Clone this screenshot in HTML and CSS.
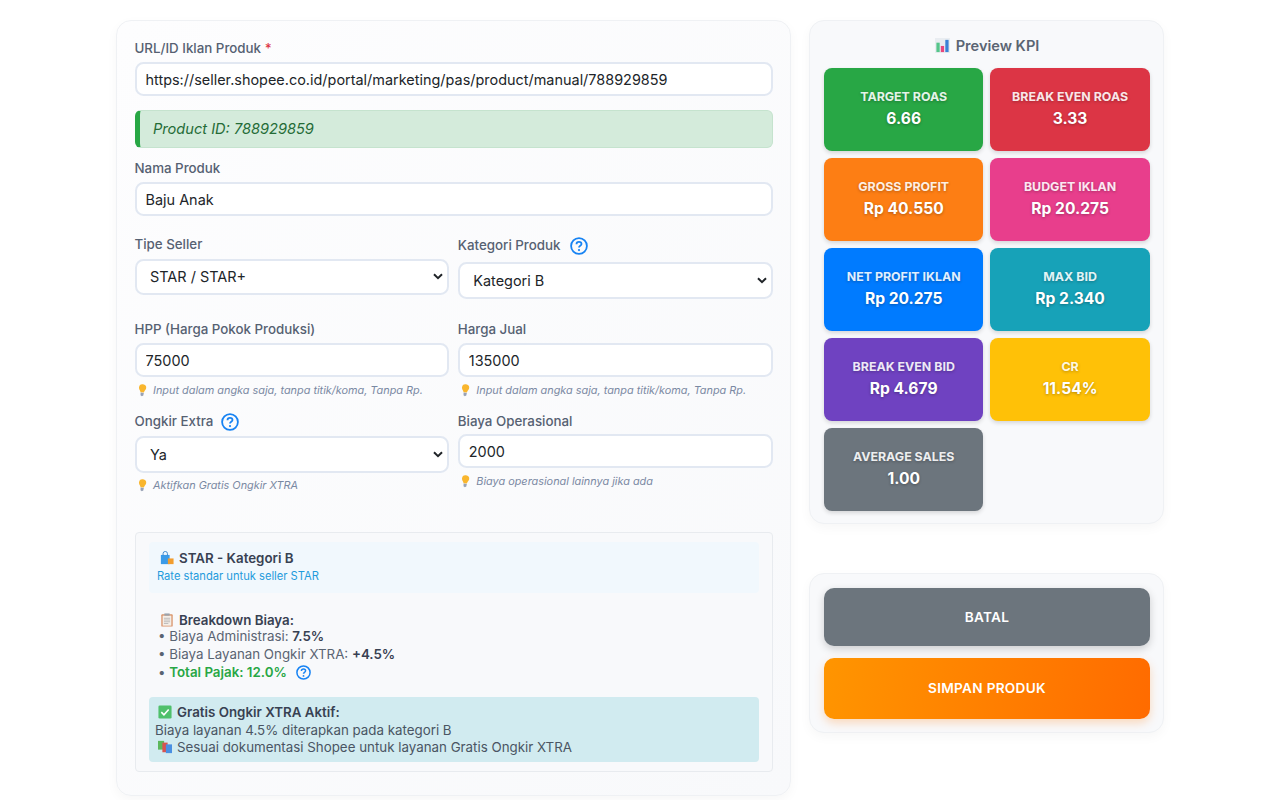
FILE: index.html
```html
<!DOCTYPE html>
<html lang="id">
<head>
<meta charset="utf-8">
<title>Produk</title>
<link rel="stylesheet" href="styles.css">
</head>
<body>
<svg class="defs" width="0" height="0" aria-hidden="true">
  <symbol id="bulb" viewBox="0 0 12 14"><path d="M7 1.200a3.600 3.600 0 0 0-4 3.300c-.1 1.500.8 2.400 1.200 3.500l.3 1.300 3.400.3.500-1.300c.6-1 1.600-1.700 1.800-3.200A3.600 3.600 0 0 0 7 1.200z" fill="#f9b62e"/><path d="M4.600 9.600l3.200.3-.5 2.500-1.500.8-1.300-1z" fill="#98a2b6"/></symbol>
  <symbol id="help" viewBox="0 0 18 18"><circle cx="9" cy="9" r="7.900" fill="none" stroke="#1783f3" stroke-width="1.800"/><path d="M6.500 7.200c0-1.500 1.100-2.300 2.500-2.300s2.500.8 2.500 2.100c0 1.800-2.500 1.800-2.500 3.500" fill="none" stroke="#1783f3" stroke-width="1.800"/><circle cx="9" cy="13.100" r="1.100" fill="#1783f3"/></symbol>
</svg>
<main class="page">
  <section class="card form-card">
    <div class="field">
      <label class="label">URL/ID Iklan Produk <span class="req">*</span></label>
      <input class="control" type="text" value="https://seller.shopee.co.id/portal/marketing/pas/product/manual/788929859">
    </div>
    <div class="alert">Product ID: 788929859</div>
    <div class="field">
      <label class="label">Nama Produk</label>
      <input class="control" type="text" value="Baju Anak">
    </div>
    <div class="row r-sel">
      <div class="field">
        <label class="label">Tipe Seller</label>
        <select class="control select"><option>STAR / STAR+</option></select>
      </div>
      <div class="field">
        <label class="label label-help">Kategori Produk <svg class="help"><use href="#help"/></svg></label>
        <select class="control select"><option>Kategori B</option></select>
      </div>
    </div>
    <div class="row r-price">
      <div class="field">
        <label class="label">HPP (Harga Pokok Produksi)</label>
        <input class="control" type="text" value="75000">
        <p class="hint"><svg class="bulb"><use href="#bulb"/></svg>Input dalam angka saja, tanpa titik/koma, Tanpa Rp.</p>
      </div>
      <div class="field">
        <label class="label">Harga Jual</label>
        <input class="control" type="text" value="135000">
        <p class="hint"><svg class="bulb"><use href="#bulb"/></svg>Input dalam angka saja, tanpa titik/koma, Tanpa Rp.</p>
      </div>
    </div>
    <div class="row r-ship">
      <div class="field">
        <label class="label label-help">Ongkir Extra <svg class="help"><use href="#help"/></svg></label>
        <select class="control select"><option>Ya</option></select>
        <p class="hint"><svg class="bulb"><use href="#bulb"/></svg>Aktifkan Gratis Ongkir XTRA</p>
      </div>
      <div class="field">
        <label class="label">Biaya Operasional</label>
        <input class="control" type="text" value="2000">
        <p class="hint"><svg class="bulb"><use href="#bulb"/></svg>Biaya operasional lainnya jika ada</p>
      </div>
    </div>
    <div class="summary">
      <div class="tier">
        <div class="tier-title"><svg class="emoji" viewBox="0 0 16 16"><path d="M1 4.500h10V15H1z" fill="#3b9be8"/><path d="M3.500 5V3a2.500 2.500 0 0 1 5 0v2" fill="none" stroke="#2f7fc8" stroke-width="1"/><path d="M9 8.500h6.500V15H9z" fill="#f29d2e"/></svg>STAR - Kategori B</div>
        <div class="tier-sub">Rate standar untuk seller STAR</div>
      </div>
      <div class="breakdown">
        <div class="bd-title"><svg class="emoji" viewBox="0 0 16 16"><rect x="1.500" y="1.500" width="13" height="14" rx="1" fill="#d9946a"/><rect x="3" y="3" width="10" height="11.500" fill="#f4efe9"/><path d="M4.500 6h7M4.500 8h7M4.500 10h7M4.500 12h5" stroke="#a9a9a9" stroke-width=".8"/><rect x="5" y=".5" width="6" height="2.500" fill="#9aa3ad"/></svg>Breakdown Biaya:</div>
        <div class="bd-line">• Biaya Administrasi: <b>7.5%</b></div>
        <div class="bd-line">• Biaya Layanan Ongkir XTRA: <b>+4.5%</b></div>
        <div class="bd-line">• <b class="ok">Total Pajak: 12.0%</b> <svg class="help help-sm"><use href="#help"/></svg></div>
      </div>
      <div class="xtra">
        <div class="xtra-title"><svg class="emoji" viewBox="0 0 16 16"><rect x=".5" y=".5" width="15" height="15" rx="1.500" fill="#4fc06b"/><path d="M3.800 8.200l3 3 5.400-6" fill="none" stroke="#fff" stroke-width="1.800"/></svg>Gratis Ongkir XTRA Aktif:</div>
        <div>Biaya layanan 4.5% diterapkan pada kategori B</div>
        <div><svg class="emoji" viewBox="0 0 16 16"><rect x="0" y="1" width="7" height="10" fill="#5cb85c"/><rect x="5" y="3" width="6" height="11" fill="#d9534f"/><rect x="9" y="5" width="7" height="10" fill="#4a90e2"/></svg>Sesuai dokumentasi Shopee untuk layanan Gratis Ongkir XTRA</div>
      </div>
    </div>
  </section>
  <aside class="side">
    <section class="card kpi-card">
      <h2 class="kpi-title"><svg class="emoji kpi-emoji" viewBox="0 0 16 16"><rect width="16" height="16" fill="#e9edf1"/><rect x="1.500" y="5" width="3.500" height="10" fill="#55c58a"/><rect x="6.200" y="8.500" width="3.500" height="6.500" fill="#e8467c"/><rect x="11" y="2" width="3.500" height="13" fill="#3b82d6"/></svg>Preview KPI</h2>
      <div class="kpi-grid">
        <div class="kpi green"><div class="kpi-label">TARGET ROAS</div><div class="kpi-value">6.66</div></div>
        <div class="kpi red"><div class="kpi-label">BREAK EVEN ROAS</div><div class="kpi-value">3.33</div></div>
        <div class="kpi orange"><div class="kpi-label">GROSS PROFIT</div><div class="kpi-value">Rp 40.550</div></div>
        <div class="kpi pink"><div class="kpi-label">BUDGET IKLAN</div><div class="kpi-value">Rp 20.275</div></div>
        <div class="kpi blue"><div class="kpi-label">NET PROFIT IKLAN</div><div class="kpi-value">Rp 20.275</div></div>
        <div class="kpi teal"><div class="kpi-label">MAX BID</div><div class="kpi-value">Rp 2.340</div></div>
        <div class="kpi purple"><div class="kpi-label">BREAK EVEN BID</div><div class="kpi-value">Rp 4.679</div></div>
        <div class="kpi yellow"><div class="kpi-label">CR</div><div class="kpi-value">11.54%</div></div>
        <div class="kpi gray"><div class="kpi-label">AVERAGE SALES</div><div class="kpi-value">1.00</div></div>
      </div>
    </section>
    <section class="card action-card">
      <button class="btn btn-cancel" type="button">BATAL</button>
      <button class="btn btn-save" type="button">SIMPAN PRODUK</button>
    </section>
  </aside>
</main>
</body>
</html>
```
FILE: styles.css
```css
* { box-sizing: border-box; }
html, body { margin: 0; height: 800px; overflow: hidden; background: #fff; }
body { font-family: Inter, "Liberation Sans", sans-serif; color: #212529; }
.defs { position: absolute; }
.page { display: grid; grid-template-columns: 675px 355px; gap: 18px; margin-left: 116px; padding-top: 20.3px; align-items: start; }
.card { background: #f8f9fb; border: 1px solid #eff1f4; border-radius: 15px; box-shadow: 0 4px 12px rgba(0,0,0,.035); }
.form-card { height: 776.2px; padding: 18px 17px 0 18px; background: linear-gradient(135deg, #fdfdfe, #f8f9fb); }
.field { display: flex; flex-direction: column; align-items: stretch; }
.label { display: block; margin: 0 0 4.4px -.5px; font-size: 13.33px; font-weight: 500; line-height: 18px; color: #566172; }
.label-help { display: flex; align-items: flex-start; gap: 4px; white-space: pre; height: 20px; }
.req { color: #dc3545; }
.control { display: block; width: 100%; height: 34.3px; padding: 1px 8.5px 0; font: 400 14.45px Inter, sans-serif; color: #212529; background: #fff; border: 2px solid #e2e8f2; border-radius: 8.5px; outline: none; }
.select { height: 36.7px; padding: 0 24px 0 13px; appearance: none; background: #fff url("data:image/svg+xml,%3Csvg xmlns='http://www.w3.org/2000/svg' width='10' height='7'%3E%3Cpath d='M1 1.200l4 4 4-4' fill='none' stroke='%23212529' stroke-width='2'/%3E%3C/svg%3E") no-repeat right 3.5px center; }
.alert { margin: 14.3px 0 11.5px; height: 37.7px; padding: 0 13px; line-height: 36.5px; font-size: 14.6px; font-style: italic; color: #256c37; background: #d4ebdb; border: 1px solid #c5e3ce; border-left: 5px solid #28a745; border-radius: 6px; }
.row { display: grid; grid-template-columns: 313.7px 314.7px; gap: 9.6px; align-items: start; }
.r-sel { margin-top: 19px; }
.r-sel .label, .r-price .label { margin-bottom: 5.4px; }
.r-sel .label-help { height: 21.4px; padding-top: 1.3px; gap: 6px; }
.r-price { margin-top: 20.9px; }
.r-ship { margin-top: 15.7px; }
.r-ship .label { margin-bottom: 4px; }
.r-ship .control { padding-top: 0; }
.hint { margin: 5.3px 0 0; display: flex; align-items: center; font-size: 10.88px; line-height: 14px; font-style: italic; color: #7a89a3; }
.bulb { width: 12px; height: 14px; margin: 0 5px 0 1px; flex: none; }
.help { width: 18px; height: 18px; margin-top: 1px; }
.help-sm { width: 15px; height: 15px; vertical-align: -3px; margin: 0 0 0 5px; }
.emoji { width: 14px; height: 14px; vertical-align: -2px; margin: 0 5px 0 3px; }
.summary { margin-top: 39.7px; height: 240px; padding: 9px 13px; background: #f8f9fb; border: 1px solid #e8ebef; border-radius: 4px; }
.tier { height: 51.6px; padding: 7.6px 8px; background: #f1f8fd; border-radius: 4px; }
.tier-title { font-size: 13.33px; line-height: 18px; font-weight: 600; color: #384152; }
.tier-sub { margin-top: .7px; font-size: 11.15px; line-height: 16px; color: #1f9bdc; }
.breakdown { margin-top: 17.7px; padding-left: 9px; font-size: 13.33px; line-height: 18px; color: #5a6472; }
.bd-title { margin-bottom: -2px; font-weight: 600; color: #384152; }
.bd-title .emoji { margin-left: 2px; }
.breakdown b { font-weight: 600; color: #384152; }
.breakdown b.ok { color: #28a745; }
.xtra { margin-top: 15.7px; height: 65.6px; padding: 7.5px 6px; background: #d1ebf0; border-radius: 4px; font-size: 13.33px; line-height: 17.2px; color: #4a5563; }
.xtra-title { font-weight: 600; color: #384152; }
.side { display: flex; flex-direction: column; gap: 49px; }
.kpi-card { height: 504px; padding: 14.7px 13px 0 14px; }
.kpi-title { margin: 0 0 12.3px; font-size: 14.6px; line-height: 20px; font-weight: 600; color: #5b6573; text-align: center; }
.kpi-emoji { width: 15px; height: 15px; margin: 0 6px 0 0; }
.kpi-grid { display: grid; grid-template-columns: 159.4px 159.4px; gap: 7.6px 7px; }
.kpi { height: 82.4px; padding: 0 4px 1px; display: flex; flex-direction: column; justify-content: center; align-items: center; color: #fff; border-radius: 8px; box-shadow: 0 2px 4px rgba(0,0,0,.14); text-shadow: 0 1px 3px rgba(0,0,0,.3); }
.kpi-label { font-size: 12.4px; line-height: 17px; font-weight: 700; opacity: .88; }
.kpi-value { margin-top: 4px; font-size: 15.6px; line-height: 20px; font-weight: 700; }
.green { background: #28a745; }
.red { background: #dc3545; }
.orange { background: #fd7e14; }
.pink { background: #e83e8c; }
.blue { background: #007bff; }
.teal { background: #17a2b8; }
.purple { background: #6f42c1; }
.yellow { background: #ffc107; }
.gray { background: #6c757d; }
.action-card { height: 159.4px; padding: 13.4px 13px 0 14px; display: flex; flex-direction: column; gap: 11.7px; }
.btn { display: block; width: 100%; border: 0; border-radius: 10px; color: #fff; font: 600 13.6px Inter, sans-serif; letter-spacing: .3px; }
.btn-cancel { height: 58.3px; flex: none; background: #6c757d; box-shadow: 0 3px 8px rgba(0,0,0,.18); }
.btn-save { height: 61px; flex: none; background: linear-gradient(100deg, #ff9500, #ff6b00); box-shadow: 0 4px 10px rgba(255,120,0,.25); }
```
